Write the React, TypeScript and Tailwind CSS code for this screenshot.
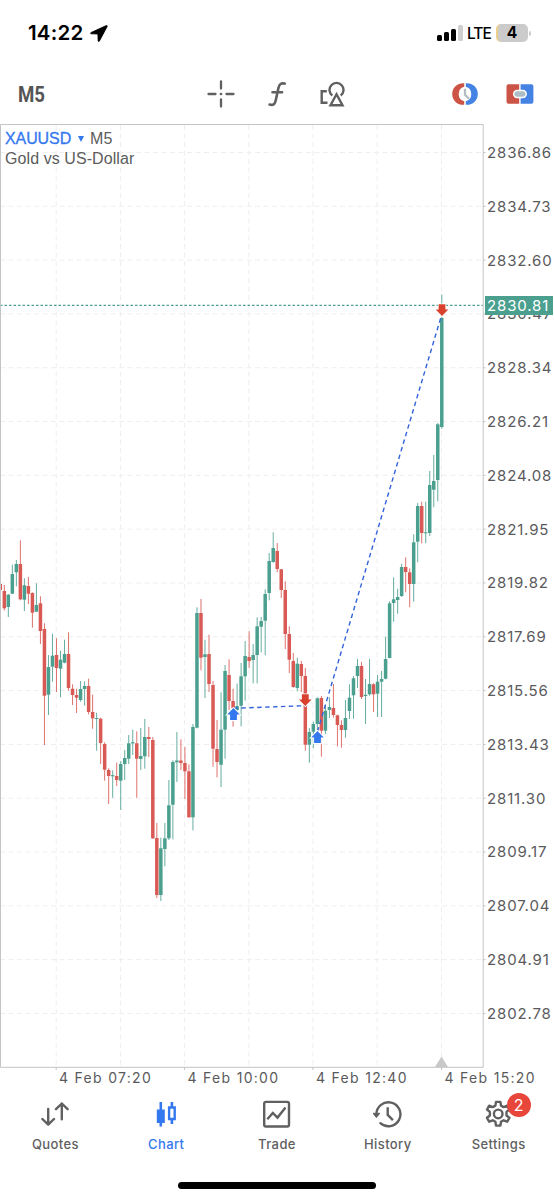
type Candle = [number, number, number, number, number];

type IconProps = {
  className?: string;
};

// [up, high, body top, body bottom, low] in chart pixels, one entry per M5 bar
const candles: Candle[] = [
  [0, 581, 584, 590, 591],
  [0, 585, 591, 608.3, 610.5],
  [1, 594, 594.7, 607, 617],
  [1, 564.7, 574, 593.7, 594],
  [1, 560, 564, 572.3, 586.3],
  [0, 540.3, 564, 599.3, 600.3],
  [1, 578.3, 585.3, 599.7, 611],
  [0, 577, 586, 593.7, 604],
  [0, 592.3, 593, 612.7, 627.7],
  [1, 583.3, 605, 611.7, 612],
  [0, 596.3, 603.3, 631, 644],
  [0, 623.3, 629, 695.7, 745],
  [1, 655, 667, 694.7, 715],
  [1, 633.7, 655.7, 666.7, 681.7],
  [0, 638.3, 655, 668, 692],
  [1, 650.7, 659.7, 668.7, 697.3],
  [1, 639.7, 654, 662.7, 663.3],
  [0, 632.3, 654, 688, 690.7],
  [0, 684.3, 688.7, 695, 705],
  [0, 688.7, 695, 697.7, 713],
  [1, 681, 689, 700, 701.7],
  [1, 681.3, 686, 689, 705.7],
  [0, 678.7, 686, 712, 714.3],
  [0, 694.7, 712, 718.3, 728.7],
  [1, 712.7, 718, 718.8, 750.7],
  [0, 717.7, 718.7, 743, 764],
  [0, 742.3, 744, 769.7, 780.7],
  [0, 768.3, 770, 776, 804],
  [1, 770.3, 775.2, 776.3, 797.7],
  [0, 762.7, 776, 780, 786],
  [1, 761, 764, 780.7, 810],
  [1, 750, 758, 764, 780],
  [1, 735, 743.3, 758.7, 764],
  [1, 729.7, 742.2, 743.4, 755],
  [0, 731.3, 743.3, 758.7, 797.7],
  [1, 728, 756, 759, 770],
  [1, 719, 737, 756.3, 768.7],
  [0, 727, 737, 739, 757],
  [0, 737, 740, 838.3, 839],
  [0, 823, 838, 895, 898],
  [1, 837.7, 848.3, 895, 901],
  [1, 823, 838.3, 849, 866.3],
  [1, 780, 805.3, 838.3, 840],
  [1, 760.3, 762, 804.7, 839.3],
  [1, 732, 760.5, 762.3, 782],
  [0, 739.3, 760.5, 763, 770],
  [0, 747, 763, 771.3, 799],
  [0, 764.3, 771.3, 817.3, 817.7],
  [1, 724, 727, 817.3, 830.3],
  [1, 607.3, 613, 727.7, 728.3],
  [0, 599, 613, 657.7, 670.3],
  [1, 639.7, 654.3, 657, 698],
  [0, 634.7, 654, 684, 692],
  [0, 681, 685, 748.7, 766.7],
  [0, 720, 749, 762, 777.3],
  [1, 692.3, 729.7, 764.7, 787],
  [1, 665, 671, 729.7, 758.7],
  [0, 659.3, 675, 701, 710],
  [0, 688.7, 701, 708, 726.7],
  [1, 683.7, 706, 710, 712],
  [1, 663, 676.3, 705.7, 726.3],
  [1, 641, 656, 676.3, 700.7],
  [0, 631.3, 657, 661, 668],
  [1, 644, 655, 660, 683.3],
  [1, 617.3, 626.3, 655, 683.3],
  [1, 617, 621, 626.7, 652.3],
  [1, 589.3, 594, 620.7, 655.3],
  [1, 553, 561, 593, 600.3],
  [1, 532.3, 548, 562, 562.7],
  [0, 543, 551, 569, 572.3],
  [0, 569, 569.3, 590, 598],
  [0, 581.3, 590, 634, 649],
  [0, 626.3, 634, 659.7, 673],
  [0, 653, 661, 687, 687.7],
  [1, 657.7, 663.7, 688, 691.3],
  [0, 661, 664, 676, 692],
  [0, 668, 676, 744.7, 750.7],
  [1, 728, 732, 744.7, 762.7],
  [1, 721.7, 724, 731.7, 748],
  [1, 697.3, 698.3, 724, 734],
  [0, 696, 698, 730.7, 756.7],
  [1, 705, 710.7, 730.7, 734.3],
  [1, 697.3, 707, 710, 718],
  [0, 684, 708, 715, 717.7],
  [0, 714.7, 715.3, 725, 746.3],
  [0, 720.3, 725, 730, 747.7],
  [1, 700, 718, 730, 737.7],
  [1, 684.3, 697.7, 711, 719],
  [1, 676, 678.3, 695.3, 718.7],
  [1, 659, 666, 676, 688],
  [0, 662, 666, 697, 699],
  [1, 679, 694.8, 696, 724],
  [1, 659, 684, 694.3, 695.7],
  [0, 683.3, 684.3, 694.3, 712],
  [1, 675, 681.7, 693.7, 717],
  [1, 671, 679, 681.7, 717],
  [1, 636.7, 659, 678.7, 679.3],
  [1, 601.3, 603.3, 658, 658.3],
  [1, 577.3, 599.3, 603, 621.7],
  [1, 588.7, 597, 600, 613.7],
  [1, 564, 567, 596, 597],
  [0, 557.3, 567, 572, 592.3],
  [0, 568.3, 572.3, 584, 607.3],
  [1, 534.3, 542.3, 584, 601.7],
  [1, 503, 506, 541.7, 562.3],
  [0, 501.7, 506, 533, 543.3],
  [1, 501.7, 532.3, 533.3, 543.3],
  [1, 471, 485, 533, 536],
  [1, 455, 481, 489.7, 507.3],
  [1, 423, 424.3, 480, 501.3],
  [1, 294.7, 318, 427, 428.7],
];

const prices = [
  "2836.86",
  "2834.73",
  "2832.60",
  "2830.47",
  "2828.34",
  "2826.21",
  "2824.08",
  "2821.95",
  "2819.82",
  "2817.69",
  "2815.56",
  "2813.43",
  "2811.30",
  "2809.17",
  "2807.04",
  "2804.91",
  "2802.78",
];

const times = ["4 Feb 07:20", "4 Feb 10:00", "4 Feb 12:40", "4 Feb 15:20"];

const columns = [56.2, 120.4, 184.6, 248.8, 312.9, 377.1, 441.5];

const BAR_STEP = 4.0135;
const ROW_STEP = 53.81;
const FIRST_ROW = 152.5;

const BuyArrow = ({ x, y }: { x: number; y: number }) => (
  <path
    d={`M${x} ${y}l6.3 6.5h-2.9v5.5h-6.8v-5.5h-2.9z`}
    fill="#3478f0"
    stroke="#fff"
    strokeWidth="1.8"
    paintOrder="stroke"
  />
);

const SellArrow = ({ x, y }: { x: number; y: number }) => (
  <path
    d={`M${x} ${y}l6.3 -6.5h-2.9v-5.2h-6.8v5.2h-2.9z`}
    fill="#d9412f"
    stroke="#fff"
    strokeWidth="1.8"
    paintOrder="stroke"
  />
);

function PriceChart() {
  return (
    <svg
      width="487"
      height="946"
      viewBox="0 124 487 946"
      className="block shrink-0"
    >
      <g stroke="#eeeeee" strokeWidth="1" strokeDasharray="5 3.5">
        {prices.map((price, i) => (
          <line
            key={price}
            x1="0"
            x2="483"
            y1={FIRST_ROW + i * ROW_STEP}
            y2={FIRST_ROW + i * ROW_STEP}
          />
        ))}
        {columns.map((x) => (
          <line key={x} x1={x} x2={x} y1="125" y2="1067" />
        ))}
      </g>

      {candles.map(([up, high, top, bottom, low], i) => {
        const x = 0.3 + i * BAR_STEP;
        return (
          <g key={i} fill={up ? "#4b9f8f" : "#d95a54"}>
            <rect
              x={x - 0.5}
              y={high}
              width="1"
              height={low - high}
              opacity="0.85"
            />
            <rect
              x={x - 1.75}
              y={top}
              width="3.5"
              height={Math.max(bottom - top, 1)}
            />
          </g>
        );
      })}

      <line
        x1="0"
        x2="483"
        y1="305.3"
        y2="305.3"
        stroke="#4b9f8f"
        strokeWidth="1.3"
        strokeDasharray="2.5 2"
      />
      <g stroke="#3263dc" strokeWidth="1.4" strokeDasharray="4.5 3.4">
        <line x1="233.5" y1="708.3" x2="305" y2="705.7" />
        <line x1="317.5" y1="731.5" x2="441" y2="317" />
      </g>
      <BuyArrow x={233.5} y={708} />
      <SellArrow x={305.3} y={706} />
      <BuyArrow x={317.5} y={731} />
      <SellArrow x={442} y={316} />

      <path d="M441.5 1056.5l6.5 10.5h-13z" fill="#c8c8c8" />
      <g stroke="#c4c4c6" strokeWidth="1" fill="none">
        <path d="M0.5 1067.3V124.5H483.2V1067.3z" />
        {prices.map((price, i) => (
          <path key={price} d={`M483 ${FIRST_ROW + i * ROW_STEP}h2.5`} />
        ))}
        <path d="M56.2 1067v3M184.6 1067v3M312.9 1067v3M441.5 1067v3" />
      </g>
    </svg>
  );
}

const CrosshairIcon = () => (
  <svg width="28" height="28" viewBox="0 0 28 28">
    <path
      d="M14 1.500v7M14 19.500v7M1.500 14h7M19.500 14h7"
      stroke="#606060"
      strokeWidth="2.300"
      strokeLinecap="round"
    />
    <circle cx="14" cy="14" r="1.300" fill="#606060" />
  </svg>
);

const FunctionIcon = () => (
  <svg width="20" height="28" viewBox="0 0 20 28" fill="none">
    <path
      d="M1.600 24.600c3.500 1 5.300-.3 6.100-4L10.500 7.800c.8-3.600 2.700-5 6.200-4.200M4.500 12.300h9.600"
      stroke="#606060"
      strokeWidth="2.600"
      strokeLinecap="round"
      strokeLinejoin="round"
    />
  </svg>
);

const ShapesIcon = () => (
  <svg
    width="26"
    height="28"
    viewBox="0 0 26 28"
    fill="none"
    stroke="#606060"
    strokeWidth="2.400"
  >
    <path d="M7.800 11.200H2.700v11.500h5.800" />
    <path d="M13.300 15.500a7 7 0 1 1 8.400 0" />
    <path d="M17.500 14.200l-6 11h12z" />
  </svg>
);

const TimeTradeIcon = () => (
  <svg width="28" height="24" viewBox="0 0 28 24" fill="none">
    <path
      d="M13.200 1.200h-1.200a10.800 10.800 0 0 0 0 21.600h1.200v-3.500a7.600 7.600 0 0 1 0-14.600z"
      fill="#cb5447"
    />
    <path
      d="M14.800 1.200h1.200a10.800 10.800 0 0 1 0 21.600h-1.200v-3.500a7.600 7.600 0 0 0 0-14.600z"
      fill="#4482e4"
    />
    <path d="M14 6.800v6l4 4" stroke="#b4bdc3" strokeWidth="2.300" />
  </svg>
);

const OneClickIcon = () => (
  <svg width="28" height="20" viewBox="0 0 28 20">
    <path d="M13.200 0.300H2.500a2 2 0 0 0-2 2v15.400a2 2 0 0 0 2 2h10.700z" fill="#cb5447" />
    <path d="M14.600 0.300h10.800a2 2 0 0 1 2 2v15.400a2 2 0 0 1-2 2H14.600z" fill="#4482e4" />
    <rect
      x="7.700"
      y="6.600"
      width="12.500"
      height="6.800"
      rx="3.400"
      fill="#acbdc5"
      stroke="#fff"
      strokeWidth="1.500"
    />
  </svg>
);

const QuotesIcon = () => (
  <svg
    width="28"
    height="28"
    viewBox="0 0 28 28"
    fill="none"
    stroke="#606060"
    strokeWidth="2.400"
    strokeLinecap="round"
    strokeLinejoin="round"
  >
    <path d="M7.200 9v15.500M1.400 19l5.800 5.700 5.800-5.700" />
    <path d="M20.800 19.200V3.500M15 9.200l5.800-5.700 5.800 5.700" />
  </svg>
);

const CandlesIcon = () => (
  <svg width="28" height="28" viewBox="0 0 28 28">
    <path
      d="M7.500 2h2.600v7.500h2.700v13.500h-2.700v3.500H7.500V23H4.800V9.500h2.700zM18.600 2h2.600v4.200h2.700v14h-2.700v3.700h-2.600v-3.700h-2.700v-14h2.700zM18.300 8.800v8.900h3.200V8.800z"
      fill="#3478f0"
      fillRule="evenodd"
    />
  </svg>
);

const TradeIcon = () => (
  <svg
    width="28"
    height="28"
    viewBox="0.5 0 28 28"
    fill="none"
    stroke="#606060"
    strokeWidth="2.400"
  >
    <rect x="1.700" y="1.900" width="24.800" height="24.600" rx="1.800" />
    <path d="M4.800 19.200l5.500-6.200 4.700 4.600 8-10" />
  </svg>
);

const HistoryIcon = () => (
  <svg width="30" height="28" viewBox="1.500 0 30 28" fill="none">
    <path
      d="M4.900 14.300a12 12 0 1 1 4 8.900"
      stroke="#606060"
      strokeWidth="2.400"
      strokeLinecap="round"
    />
    <path d="M1.500 13.300h6.800l-3.400 4.200z" fill="#606060" stroke="#606060" />
    <path d="M16.200 7.200v7.700l5.200 5.200" stroke="#606060" strokeWidth="2.400" />
  </svg>
);

const SettingsIcon = () => (
  <svg
    width="28"
    height="28"
    viewBox="0.800 0 28 28"
    fill="none"
    stroke="#606060"
    strokeWidth="2.400"
    strokeLinejoin="round"
  >
    <path d="M11.800 1.900h4.400l.6 3.700 2.600 1.500 3.600-1.400 2.200 3.800-2.900 2.400v3.600l2.900 2.300-2.200 3.900-3.600-1.400-2.600 1.500-.6 3.800h-4.400l-.6-3.800-2.600-1.500L5 21.700l-2.200-3.900 2.900-2.300v-3.600L2.800 9.500 5 5.700l3.600 1.400 2.600-1.500z" />
    <circle cx="14" cy="13.900" r="4.300" />
  </svg>
);

const LocationIcon = ({ className }: IconProps) => (
  <svg width="18" height="18" viewBox="0 0 18 18" className={className}>
    <path
      d="M16.200.6L1.100 7.500c-.8.400-.6 1.300.2 1.300l6.600.2.200 6.700c0 .9 1 1.100 1.400.200L17.200 1.500c.3-.7-.3-1.200-1-.9z"
      fill="#000"
      stroke="#000"
      strokeWidth="0.800"
    />
  </svg>
);

function StatusBar() {
  return (
    <div className="flex h-[66px] items-center justify-between pl-[28px] pr-[23px]">
      <div className="flex items-center">
        <span className="text-[20.5px] font-semibold leading-6 text-black tracking-[0.2px]">
          14:22
        </span>
        <LocationIcon className="ml-[7px] mt-[2px]" />
      </div>
      <div className="flex items-center">
        <div className="flex items-end gap-[2px] mr-[4px]">
          <span className="h-[6px] w-[5px] rounded-[1.5px] bg-black" />
          <span className="h-[9px] w-[5px] rounded-[1.5px] bg-black" />
          <span className="h-[12px] w-[5px] rounded-[1.5px] bg-black" />
          <span className="h-[16px] w-[5px] rounded-[1.5px] bg-[#cfcfcf]" />
        </div>
        <span className="w-[29px] pt-[1px] text-[15.5px] font-medium leading-6 tracking-[-1px] text-black">
          LTE
        </span>
        <div className="flex h-[18px] w-[32px] items-center justify-center overflow-hidden rounded-[5px] border-l-[2.5px] border-[#ecd08a] bg-[#cbcbcb] pr-[2px] text-[15.5px] font-bold text-black">
          4
        </div>
        <span className="ml-[1px] h-[5px] w-[2px] rounded-r-full bg-[#cbcbcb]" />
      </div>
    </div>
  );
}

function Toolbar() {
  return (
    <div className="flex h-[58px] items-center pb-[3px] text-[#555]">
      <button
        type="button"
        className="w-[207px] pl-[18px] text-left font-['Roboto'] text-[22.5px] font-bold leading-7"
      >
        <span className="inline-block origin-left scale-x-[0.83]">M5</span>
      </button>
      <CrosshairIcon />
      <span className="ml-[33px]">
        <FunctionIcon />
      </span>
      <span className="ml-[31px]">
        <ShapesIcon />
      </span>
      <span className="ml-[106px]">
        <TimeTradeIcon />
      </span>
      <span className="ml-[27px]">
        <OneClickIcon />
      </span>
    </div>
  );
}

const tabs = [
  { name: "Quotes", icon: <QuotesIcon /> },
  { name: "Chart", icon: <CandlesIcon />, active: true },
  { name: "Trade", icon: <TradeIcon /> },
  { name: "History", icon: <HistoryIcon /> },
  { name: "Settings", icon: <SettingsIcon />, badge: 2 },
];

export default function App() {
  return (
    <div className="flex h-[1200px] w-[554px] flex-col overflow-hidden bg-white font-['Inter',sans-serif]">
      <StatusBar />
      <Toolbar />

      <div className="relative flex h-[946px]">
        <PriceChart />
        <div className="pt-[1.6px] text-[15px] leading-none tracking-[0.85px] text-[#5a5a5c]">
          {prices.map((price) => (
            <div key={price} className="flex h-[53.81px] items-center">
              {price}
            </div>
          ))}
        </div>
        <div className="absolute left-[485px] top-[172px] flex h-[19px] w-[68px] items-center bg-[#4b9f8f] pl-[2px] text-[15px] leading-none tracking-[0.85px] text-white">
          2830.81
        </div>
        <div className="absolute left-[5px] top-[4px] font-['Liberation_Sans',sans-serif] text-[16px] leading-5 text-[#5c5c5c]">
          <div className="flex h-[21px] items-center">
            <span className="tracking-[-0.1px] text-[#3478f0] [-webkit-text-stroke:0.3px_#3478f0]">
              XAUUSD
            </span>
            <svg width="6" height="6" viewBox="0 0 6 6" className="mx-[6.5px]">
              <path d="M0 0h6l-3 6z" fill="#3478f0" />
            </svg>
            <span>M5</span>
          </div>
          <div className="tracking-[0.08px]">Gold vs US-Dollar</div>
        </div>
      </div>

      <div className="flex h-[20px] pl-[59px] text-[14px] leading-4 tracking-[1.3px] text-[#5a5a5c]">
        {times.map((time) => (
          <span key={time} className="w-[128.5px] shrink-0 whitespace-nowrap">
            {time}
          </span>
        ))}
      </div>

      <div className="grid h-[92px] grid-cols-5 pt-[10px]">
        {tabs.map((tab) => (
          <button
            key={tab.name}
            type="button"
            className={
              tab.active
                ? "flex flex-col items-center text-[#3478f0]"
                : "flex flex-col items-center text-[#606060]"
            }
          >
            <span className="relative">
              {tab.icon}
              {tab.badge && (
                <span className="absolute -top-[7px] left-[22px] flex size-[24px] items-center justify-center rounded-full bg-[#e8463a] text-[16px] text-white">
                  {tab.badge}
                </span>
              )}
            </span>
            <span className="mt-[8px] text-[13px] font-medium leading-4 tracking-[0.4px]">
              {tab.name}
            </span>
          </button>
        ))}
      </div>

      <div className="mx-auto h-[7px] w-[198px] shrink-0 rounded-full bg-black" />
    </div>
  );
}
